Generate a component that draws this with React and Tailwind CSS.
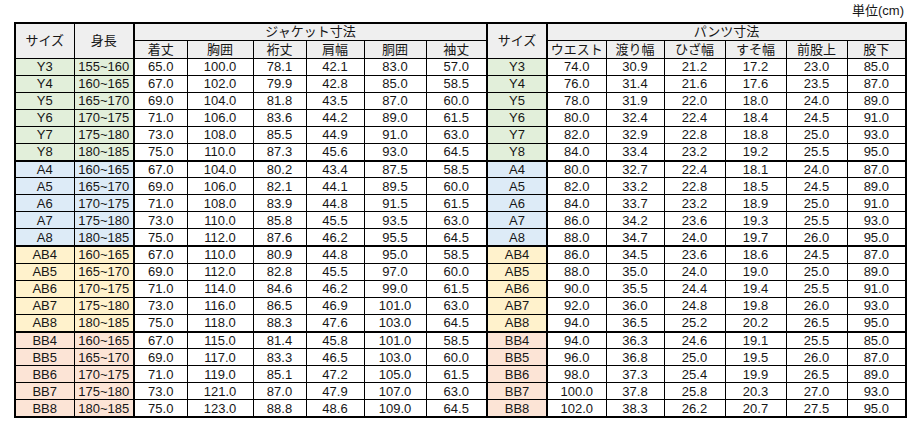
import React from 'react'

const rows = [
  ['Y3', '155~160', '65.0', '100.0', '78.1', '42.1', '83.0', '57.0', '74.0', '30.9', '21.2', '17.2', '23.0', '85.0'],
  ['Y4', '160~165', '67.0', '102.0', '79.9', '42.8', '85.0', '58.5', '76.0', '31.4', '21.6', '17.6', '23.5', '87.0'],
  ['Y5', '165~170', '69.0', '104.0', '81.8', '43.5', '87.0', '60.0', '78.0', '31.9', '22.0', '18.0', '24.0', '89.0'],
  ['Y6', '170~175', '71.0', '106.0', '83.6', '44.2', '89.0', '61.5', '80.0', '32.4', '22.4', '18.4', '24.5', '91.0'],
  ['Y7', '175~180', '73.0', '108.0', '85.5', '44.9', '91.0', '63.0', '82.0', '32.9', '22.8', '18.8', '25.0', '93.0'],
  ['Y8', '180~185', '75.0', '110.0', '87.3', '45.6', '93.0', '64.5', '84.0', '33.4', '23.2', '19.2', '25.5', '95.0'],
  ['A4', '160~165', '67.0', '104.0', '80.2', '43.4', '87.5', '58.5', '80.0', '32.7', '22.4', '18.1', '24.0', '87.0'],
  ['A5', '165~170', '69.0', '106.0', '82.1', '44.1', '89.5', '60.0', '82.0', '33.2', '22.8', '18.5', '24.5', '89.0'],
  ['A6', '170~175', '71.0', '108.0', '83.9', '44.8', '91.5', '61.5', '84.0', '33.7', '23.2', '18.9', '25.0', '91.0'],
  ['A7', '175~180', '73.0', '110.0', '85.8', '45.5', '93.5', '63.0', '86.0', '34.2', '23.6', '19.3', '25.5', '93.0'],
  ['A8', '180~185', '75.0', '112.0', '87.6', '46.2', '95.5', '64.5', '88.0', '34.7', '24.0', '19.7', '26.0', '95.0'],
  ['AB4', '160~165', '67.0', '110.0', '80.9', '44.8', '95.0', '58.5', '86.0', '34.5', '23.6', '18.6', '24.5', '87.0'],
  ['AB5', '165~170', '69.0', '112.0', '82.8', '45.5', '97.0', '60.0', '88.0', '35.0', '24.0', '19.0', '25.0', '89.0'],
  ['AB6', '170~175', '71.0', '114.0', '84.6', '46.2', '99.0', '61.5', '90.0', '35.5', '24.4', '19.4', '25.5', '91.0'],
  ['AB7', '175~180', '73.0', '116.0', '86.5', '46.9', '101.0', '63.0', '92.0', '36.0', '24.8', '19.8', '26.0', '93.0'],
  ['AB8', '180~185', '75.0', '118.0', '88.3', '47.6', '103.0', '64.5', '94.0', '36.5', '25.2', '20.2', '26.5', '95.0'],
  ['BB4', '160~165', '67.0', '115.0', '81.4', '45.8', '101.0', '58.5', '94.0', '36.3', '24.6', '19.1', '25.5', '85.0'],
  ['BB5', '165~170', '69.0', '117.0', '83.3', '46.5', '103.0', '60.0', '96.0', '36.8', '25.0', '19.5', '26.0', '87.0'],
  ['BB6', '170~175', '71.0', '119.0', '85.1', '47.2', '105.0', '61.5', '98.0', '37.3', '25.4', '19.9', '26.5', '89.0'],
  ['BB7', '175~180', '73.0', '121.0', '87.0', '47.9', '107.0', '63.0', '100.0', '37.8', '25.8', '20.3', '27.0', '93.0'],
  ['BB8', '180~185', '75.0', '123.0', '88.8', '48.6', '109.0', '64.5', '102.0', '38.3', '26.2', '20.7', '27.5', '95.0'],
]

const widths = [59, 60, 53, 66, 53, 58, 62, 61, 60, 59, 58, 61, 61, 61, 59]

// size group colours
const tint = {
  Y: 'bg-[#e2efda]',
  A: 'bg-[#ddebf7]',
  AB: 'bg-[#fff2cc]',
  BB: 'bg-[#fce4d6]',
}

const groupOf = (s) => s.replace(/\d/g, '')

const cell = 'border border-black text-center align-middle p-0 leading-none'
const head = 'border border-black text-center align-middle p-0 leading-none bg-[#efefef] font-normal'

export default function App() {
  return (
    <div className="w-[917px] h-[432px] bg-white text-[13px] text-[#161616] font-['Liberation_Sans','Noto_Sans_CJK_JP',sans-serif]">
      <div className="h-[22px] flex items-end justify-end pr-[13px] pb-[2px]">単位(cm)</div>
      <div className="pl-[14px]">
        <table className="table-fixed border-collapse border-2 border-black w-[891px]">
          <colgroup>
            {widths.map((w, i) => (
              <col key={i} style={{ width: w }} />
            ))}
          </colgroup>
          <thead>
            <tr className="h-[17px]">
              <th rowSpan={2} className={head}>サイズ</th>
              <th rowSpan={2} className={head}>身長</th>
              <th colSpan={6} className={head + ' border-l-2'}>ジャケット寸法</th>
              <th rowSpan={2} className={head + ' border-l-2'}>サイズ</th>
              <th colSpan={6} className={head + ' border-l-2'}>パンツ寸法</th>
            </tr>
            <tr className="h-[18px]">
              {['着丈', '胸囲', '裄丈', '肩幅', '胴囲', '袖丈'].map((t, i) => (
                <th key={t} className={head + (i === 0 ? ' border-l-2' : '')}>{t}</th>
              ))}
              {['ウエスト', '渡り幅', 'ひざ幅', 'すそ幅', '前股上', '股下'].map((t, i) => (
                <th key={t} className={head + (i === 0 ? ' border-l-2' : '')}>{t}</th>
              ))}
            </tr>
          </thead>
          <tbody>
            {rows.map((r, ri) => {
              const g = groupOf(r[0])
              const first = ri > 0 && groupOf(rows[ri - 1][0]) !== g
              const top = first ? ' border-t-2' : ''
              return (
                <tr key={r[0]} className="h-[17.1px]">
                  <td className={cell + ' ' + tint[g] + top}>{r[0]}</td>
                  <td className={cell + ' ' + tint[g] + top}>{r[1]}</td>
                  {r.slice(2, 8).map((v, i) => (
                    <td key={i} className={cell + top + (i === 0 ? ' border-l-2' : '')}>{v}</td>
                  ))}
                  <td className={cell + ' border-l-2 ' + tint[g] + top}>{r[0]}</td>
                  {r.slice(8).map((v, i) => (
                    <td key={'p' + i} className={cell + top + (i === 0 ? ' border-l-2' : '')}>{v}</td>
                  ))}
                </tr>
              )
            })}
          </tbody>
        </table>
      </div>
    </div>
  )
}
